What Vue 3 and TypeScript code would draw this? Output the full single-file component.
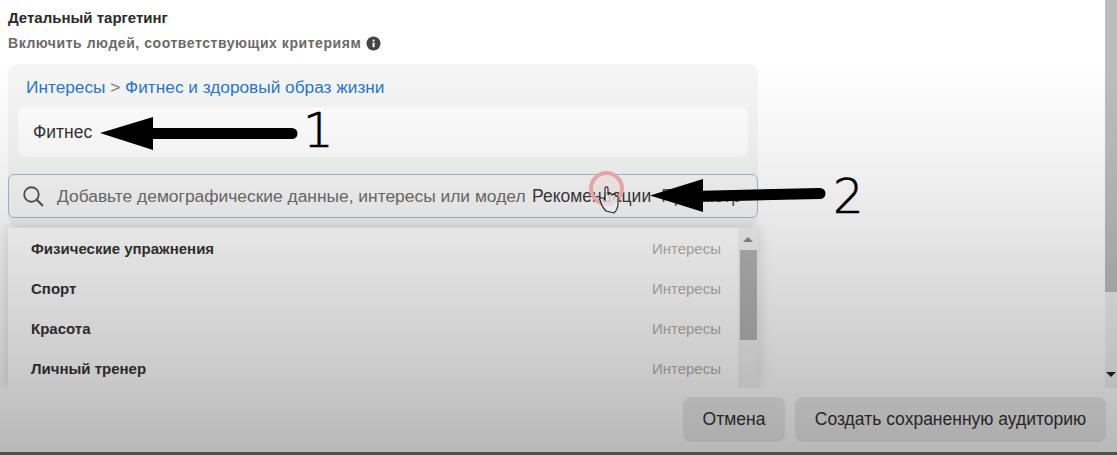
<script setup lang="ts">
const rows: string[] = ['Физические упражнения', 'Спорт', 'Красота', 'Личный тренер']
</script>

<template>
  <div class="page">
    <div class="top">
      <main class="content">
        <h2 class="title">Детальный таргетинг</h2>
        <div class="sub">
          <span>Включить людей, соответствующих критериям</span>
          <svg class="info" viewBox="0 0 16 16" width="16" height="16">
            <circle cx="8" cy="8" r="7.5" fill="#444" />
            <rect x="7" y="7" width="2.2" height="5" fill="#fff" />
            <circle cx="8.1" cy="4.9" r="1.2" fill="#fff" />
          </svg>
        </div>
        <section class="panel">
          <div class="crumb"><a>Интересы</a><i> &gt; </i><a>Фитнес и здоровый образ жизни</a></div>
          <div class="chip">Фитнес</div>
          <div class="search">
            <svg class="glass" viewBox="0 0 20 20" width="22" height="22" fill="none" stroke="#555" stroke-width="1.7">
              <circle cx="8.6" cy="8.6" r="6.6" />
              <path d="M13.4 13.4 18.4 18.4" stroke-linecap="round" stroke-width="2" />
            </svg>
            <span class="ph">Добавьте демографические данные, интересы или модел</span>
            <span class="links">Рекомендации</span>
            <span class="links second">Просмотр</span>
          </div>
        </section>
        <div class="menu">
          <ul class="list">
            <li v-for="r in rows" :key="r" class="row">
              <b>{{ r }}</b><span>Интересы</span>
            </li>
          </ul>
          <div class="mbar">
            <span class="up"></span>
            <span class="mthumb"></span>
          </div>
        </div>
      </main>
      <aside class="pagebar">
        <span class="pthumb"></span>
        <span class="down"></span>
      </aside>
    </div>
    <footer class="foot">
      <button class="btn cancel">Отмена</button>
      <button class="btn create">Создать сохраненную аудиторию</button>
    </footer>
    <div class="edge"></div>

    <div class="shade"></div>

    <svg class="marks" viewBox="0 0 1117 455" width="1117" height="455">
      <circle cx="606.5" cy="188.5" r="15.5" fill="rgba(240,90,90,.06)" stroke="#e6a5a5" stroke-width="4" />
      <path d="M100 133 153 117V128L292 128A5.5 5.5 0 0 1 292 139L153 139V150Z" fill="#000" />
      <path d="M650 195.5 703 179V190.7L820 188A5.5 5.5 0 0 1 820 199L703 201.7V212Z" fill="#000" />
      <path d="M606 211C603 208 601 204 600 200 599 197 603 197 605 200V189C605 186 608 186 608 189V195C609 193 612 193 612 195 613 194 616 194 616 196 617 195 618 196 618 198V204C618 208 616 211 614 213Z" fill="rgba(235,235,235,.75)" stroke="#222" stroke-width="1.1" />
    </svg>
    <span class="num one">1</span>
    <span class="num two">2</span>
  </div>
</template>

<style>
html, body { margin: 0; background: #fff; }
</style>

<style scoped>
.page {
  position: relative;
  width: 1117px;
  height: 455px;
  overflow: hidden;
  display: flex;
  flex-direction: column;
  background: #fff;
  font-family: "Liberation Sans", Arial, sans-serif;
}
.top { display: flex; height: 388px; flex: none; overflow: hidden; }
.content { position: relative; flex: 1; padding: 8px 0 0 8px; min-width: 0; }
.title { margin: 0; font-size: 15px; line-height: 20px; font-weight: 700; color: #2a2a2a; }
.sub {
  display: flex; align-items: center; gap: 6px;
  margin-top: 6px; height: 18px;
  font-size: 14px; letter-spacing: .55px; font-weight: 700; color: #6a6a6a;
}
.info { width: 15px; height: 15px; margin-left: -1px; }
.panel {
  width: 750px; margin-top: 12px; height: 163px;
  background: #f6f6f6; border-radius: 10px;
  padding-top: 11px; box-sizing: border-box;
}
.crumb { padding-left: 18px; font-size: 17.25px; line-height: 24px; color: #777; }
.crumb a { color: #2a78c8; }
.crumb i { font-style: normal; }
.chip {
  margin: 8px 10px 0; height: 50px; padding-left: 15px;
  display: flex; align-items: center;
  background: #fff; border-radius: 8px;
  font-size: 17.5px; color: #333;
}
.search {
  display: flex; align-items: center; box-sizing: border-box;
  margin-top: 17px; height: 44px; padding-left: 13px;
  background: #f8f8f8; border: 1px solid #a9bacd; border-radius: 6px;
  overflow: hidden; white-space: nowrap;
}
.glass { flex: none; }
.ph { flex: none; width: 465px; margin-left: 13px; color: #6d6d6d; font-size: 17.4px; }
.links { flex: none; margin-left: 10px; color: #3a3a3a; font-size: 17.5px; }
.second { margin-left: 10px; color: #555; }
.menu {
  position: absolute; left: 8px; top: 228px;
  width: 750px; height: 160px;
  display: flex; background: #fff;
  box-shadow: 0 0 14px rgba(0,0,0,.16);
  overflow: hidden;
}
.list { list-style: none; margin: 0; padding: 0; flex: 1; }
.row {
  display: flex; align-items: center; justify-content: space-between;
  height: 40px; padding: 0 17px 0 23px; box-sizing: border-box;
  font-size: 15px; color: #333;
}
.row b { font-weight: 700; }
.row span { font-size: 15px; color: #b0b0b0; }
.mbar { position: relative; flex: none; width: 20px; display: flex; flex-direction: column; align-items: center; background: #f1f1f1; }
.up { margin-top: 9px; border: 5px solid transparent; border-top: 0; border-bottom: 5px solid #8a8a8a; }
.mthumb { margin-top: 8px; width: 17px; height: 90px; background: #b4b4b4; }
.pagebar { flex: none; width: 12px; position: relative; background: #f1f1f1; display: flex; flex-direction: column; align-items: center; }
.pthumb { width: 12px; height: 292px; background: #bdbdbd; }
.down { margin-top: 80px; border: 5px solid transparent; border-bottom: 0; border-top: 5px solid #222; }
.foot {
  flex: 1; display: flex; justify-content: flex-end; align-items: flex-start; gap: 10px;
  padding: 9px 11px 0 0;
}
.btn {
  height: 45px; border: 0; border-radius: 8px; background: #ececec;
  font-family: inherit; font-size: 17.5px; color: #333; padding: 0;
}
.cancel { width: 102px; }
.create { width: 311px; }
.edge { flex: none; height: 3px; background: #4f4f4f; }
.shade {
  position: absolute; inset: 0 0 3px; pointer-events: none;
  background: linear-gradient(to bottom, rgba(0,0,0,0) 60px, rgba(0,0,0,.04) 140px, rgba(0,0,0,.09) 220px, rgba(0,0,0,.19) 350px, rgba(0,0,0,.28) 452px);
}
.marks { position: absolute; left: 0; top: 0; pointer-events: none; }
.num { position: absolute; font-family: "DejaVu Sans", sans-serif; font-weight: 200; font-size: 48px; line-height: 48px; color: #000; -webkit-text-stroke: .7px #000; }
.one { left: 303px; top: 106px; }
.two { left: 833px; top: 172px; }
</style>
